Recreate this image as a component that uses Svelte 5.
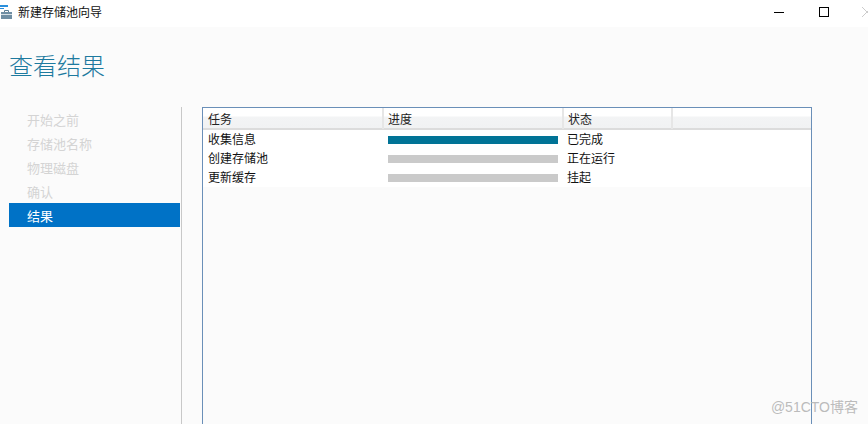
<script>
  const steps = [
    { label: '开始之前' },
    { label: '存储池名称' },
    { label: '物理磁盘' },
    { label: '确认' },
    { label: '结果', active: true }
  ];

  const tasks = [
    { name: '收集信息', done: true, status: '已完成' },
    { name: '创建存储池', done: false, status: '正在运行' },
    { name: '更新缓存', done: false, status: '挂起' }
  ];
</script>

<div class="window">
  <header class="titlebar">
    <svg class="app-icon" width="16" height="16" viewBox="0 0 16 16">
      <rect x="0" y="1" width="8" height="2" fill="#2a8fdc" />
      <rect x="0" y="4" width="4" height="1" fill="#2a8fdc" />
      <path d="M4.5 8V6.5h4V8" stroke="#5d7f96" fill="none" />
      <rect x="1" y="8" width="11" height="7" fill="#6f8ea3" />
      <rect x="1" y="10" width="11" height="1" fill="#d6e0e6" />
    </svg>
    <span class="title">新建存储池向导</span>
    <div class="controls">
      <span class="minimize"></span>
      <span class="maximize"></span>
      <span class="close">
        <svg width="10" height="10" viewBox="0 0 10 10">
          <path d="M0 0l10 10M10 0L0 10" stroke="#ccc" fill="none" />
        </svg>
      </span>
    </div>
  </header>

  <h1>查看结果</h1>

  <div class="content">
    <nav class="steps">
      {#each steps as step}
        <div class="step" class:active={step.active}>{step.label}</div>
      {/each}
    </nav>

    <section class="panel">
      <div class="head">
        <div class="col">任务</div>
        <div class="col">进度</div>
        <div class="col status">状态</div>
        <div class="col rest"></div>
      </div>
      <div class="rows">
        {#each tasks as task}
          <div class="row">
            <div class="name">{task.name}</div>
            <div class="bar-cell"><div class="bar" class:done={task.done}></div></div>
            <div class="state">{task.status}</div>
          </div>
        {/each}
      </div>
    </section>
  </div>

  <div class="watermark">@51CTO博客</div>
</div>

<style>
  :global(body) { margin: 0; background: #fbfbfb; }

  .window {
    position: relative;
    width: 868px; height: 424px; overflow: hidden;
    background: #fbfbfb;
    font-family: "Noto Sans CJK SC", "Liberation Sans", sans-serif;
    font-size: 12px; color: #111;
  }

  .titlebar {
    display: flex; align-items: center;
    height: 27px; background: #fff;
  }
  .app-icon { flex: none; align-self: flex-start; margin-top: 4px; }
  .title { margin-left: 2px; line-height: 24px; margin-top: -3px; }

  .controls {
    margin-left: auto; margin-top: -3px;
    display: flex; align-items: center;
  }
  .minimize { width: 10px; height: 1px; background: #000; margin-right: 35px; }
  .maximize { width: 8px; height: 8px; border: 1px solid #000; margin-right: 33px; }
  .close { display: flex; margin-right: -4px; }

  h1 {
    margin: 0; padding: 0 0 0 9px;
    height: 80px; line-height: 76px;
    font-size: 24px; font-weight: 300; color: #1d7a9f;
  }

  .content { display: flex; align-items: flex-start; }

  .steps {
    width: 172px; height: 317px;
    margin-left: 9px;
    border-right: 1px solid #c8c8c8;
  }
  .step {
    height: 24px; line-height: 26px;
    padding-left: 18px;
    font-size: 13px; color: #d4d4d4;
    margin-right: 1px;
  }
  .step.active { background: #0072c6; color: #fff; }

  .panel {
    margin-left: 20px;
    width: 608px; height: 320px;
    border: 1px solid #6a8fb8;
    background: #fbfbfb;
  }

  .head {
    display: grid; grid-template-columns: 181px 180px 109px 1fr;
    height: 22px; box-sizing: border-box;
    border-bottom: 2px solid #dcdcdc;
    background: linear-gradient(#fff 0, #fff 40%, #f3f4f5 45%, #f1f2f3 100%);
  }
  .col {
    padding-left: 5px; line-height: 21px;
    border-right: 2px solid #e6e6e6;
    color: #222;
  }
  .col:nth-child(2), .col.status { padding-left: 4px; }
  .col.rest { border-right: 0; }

  .rows { background: #fff; }
  .row {
    display: grid; grid-template-columns: 180px 180px 1fr;
    height: 19px; align-items: center;
  }
  .name { padding-left: 5px; line-height: 17px; margin-bottom: 2px; }
  .state { padding-left: 4px; line-height: 17px; margin-bottom: 2px; }
  .bar-cell { padding: 0 5px; }
  .bar { height: 8px; width: 170px; background: #cacaca; }
  .bar.done { background: #007396; }

  .watermark {
    position: absolute; right: 10px; bottom: 8px;
    font-size: 14px; color: #bbb;
    font-family: "Liberation Sans", "Noto Sans CJK SC", sans-serif;
  }
</style>
